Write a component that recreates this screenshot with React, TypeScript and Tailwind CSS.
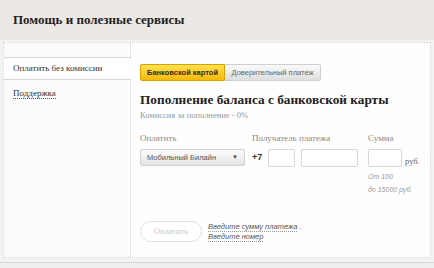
import React from 'react';

const serif = { fontFamily: '"Liberation Serif", "DejaVu Serif", serif' };

export default function App() {
  return (
    <div className="w-[434px] h-[268px] overflow-hidden bg-[#f4f3f1] flex flex-col">
      {/* Header */}
      <div className="h-[40px] shrink-0 bg-[#ebe8e5] flex items-center px-[13px]">
        <h1 className="font-['Liberation_Serif',serif] font-bold text-[13px] text-[#222]">
          Помощь и полезные сервисы
        </h1>
      </div>

      {/* Panel */}
      <div className="mt-[2px] mx-[3px] h-[216px] shrink-0 border border-dotted border-[#d4d4d4] bg-white flex">
        {/* Sidebar */}
        <div className="w-[127px] shrink-0 border-r border-dotted border-[#d4d4d4] bg-[#fbfbfb] pt-[14px]">
          <div className="h-[23px] -mr-px border-y border-[#d8d8d8] bg-white flex items-center pl-[9px]">
            <span className="text-[9px] text-[#333]" style={serif}>Оплатить без комиссии</span>
          </div>
          <div className="pl-[9px] mt-[7px] text-[9px] leading-[12px]">
            <span className="text-[#333] border-b border-dotted border-[#555]" style={serif}>Поддержка</span>
          </div>
        </div>

        {/* Content */}
        <div className="flex-1 pl-[9px] pt-[21px] bg-[#fefefe]">
          {/* Tabs */}
          <div className="flex h-[17px]">
            <div className="w-[85px] rounded-l-[2px] border border-[#d6a400] bg-gradient-to-b from-[#ffe14d] to-[#f6b900] flex items-center justify-center">
              <span className="font-['Liberation_Sans',sans-serif] text-[7.5px] font-bold text-[#3a2c00]">Банковской картой</span>
            </div>
            <div className="w-[96px] rounded-r-[2px] border border-l-0 border-[#cfcfcf] bg-gradient-to-b from-[#fbfbfb] to-[#dedede] flex items-center justify-center">
              <span className="font-['Liberation_Sans',sans-serif] text-[7.5px] text-[#666]">Доверительный платеж</span>
            </div>
          </div>

          <h2 className="mt-[12px] font-['Liberation_Serif',serif] font-bold text-[13.3px] text-[#222] leading-[14px]">
            Пополнение баланса с банковской карты
          </h2>
          <div className="mt-[3px] text-[8.5px] text-[#999] leading-[10px]" style={serif}>Комиссия за пополнение - 0%</div>

          {/* Form row */}
          <div className="mt-[13px] flex">
            <div className="w-[112px] shrink-0">
              <div className="text-[9px] text-[#888] leading-[11px]" style={serif}>Оплатить</div>
              <div className="mt-[5px] w-[105px] h-[17px] rounded-[2px] border border-[#d0d0d0] bg-gradient-to-b from-[#fdfdfd] to-[#e4e4e4] flex items-center justify-between px-[6px]">
                <span className="font-['Liberation_Sans',sans-serif] text-[7.5px] text-[#555]">Мобильный Билайн</span>
                <span className="text-[6px] text-[#444]">▼</span>
              </div>
            </div>
            <div className="w-[116px] shrink-0">
              <div className="text-[9px] text-[#888] leading-[11px]" style={serif}>Получатель платежа</div>
              <div className="mt-[5px] flex items-center">
                <span className="font-['Liberation_Sans',sans-serif] text-[9px] font-bold text-[#333] w-[16px]">+7</span>
                <div className="w-[27px] h-[18px] border border-[#d8d8d8] rounded-[2px] bg-white" />
                <div className="ml-[6px] w-[57px] h-[18px] border border-[#d8d8d8] rounded-[2px] bg-white" />
              </div>
            </div>
            <div>
              <div className="text-[9px] text-[#888] leading-[11px]" style={serif}>Сумма</div>
              <div className="mt-[5px] flex items-end">
                <div className="w-[34px] h-[18px] border border-[#d8d8d8] rounded-[2px] bg-white" />
                <span className="ml-[3px] text-[8.5px] text-[#666] leading-[11px]" style={serif}>руб.</span>
              </div>
              <div className="mt-[3px] font-['Liberation_Sans',sans-serif] italic text-[7px] text-[#999] leading-[13px]">
                <div>От 100</div>
                <div>до 15000 руб.</div>
              </div>
            </div>
          </div>

          {/* Submit */}
          <div className="mt-[25px] flex items-center">
            <div className="w-[62px] h-[21px] rounded-full border border-[#e0e0e0] bg-white flex items-center justify-center">
              <span className="text-[8.5px] text-[#c8c8c8]" style={serif}>Оплатить</span>
            </div>
            <div className="ml-[6px] font-['Liberation_Sans',sans-serif] italic text-[7.5px] text-[#555] leading-[10px]">
              <div><span className="border-b border-dotted border-[#999]">Введите сумму платежа</span> .</div>
              <div><span className="border-b border-dotted border-[#999]">Введите номер</span></div>
            </div>
          </div>
        </div>
      </div>

      {/* Bottom strip */}
      <div className="mt-[4px] border-t border-[#d6d6d6] flex-1 bg-[#efefef]" />
    </div>
  );
}
